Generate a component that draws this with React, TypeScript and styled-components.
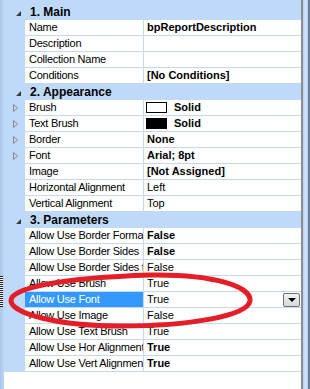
import React from 'react'
import styled, { createGlobalStyle } from 'styled-components'

type Prop = {
  label: string
  value?: string
  bold?: boolean
  swatch?: string
  sub?: boolean
  selected?: boolean
}

type Section = { title: string; props: Prop[] }

const sections: Section[] = [
  {
    title: '1. Main',
    props: [
      { label: 'Name', value: 'bpReportDescription', bold: true },
      { label: 'Description' },
      { label: 'Collection Name' },
      { label: 'Conditions', value: '[No Conditions]', bold: true },
    ],
  },
  {
    title: '2. Appearance',
    props: [
      { label: 'Brush', value: 'Solid', bold: true, swatch: '#ffffff', sub: true },
      { label: 'Text Brush', value: 'Solid', bold: true, swatch: '#000000', sub: true },
      { label: 'Border', value: 'None', bold: true, sub: true },
      { label: 'Font', value: 'Arial; 8pt', bold: true, sub: true },
      { label: 'Image', value: '[Not Assigned]', bold: true },
      { label: 'Horizontal Alignment', value: 'Left' },
      { label: 'Vertical Alignment', value: 'Top' },
    ],
  },
  {
    title: '3. Parameters',
    props: [
      { label: 'Allow Use Border Formats', value: 'False', bold: true },
      { label: 'Allow Use Border Sides', value: 'False', bold: true },
      { label: 'Allow Use Border Sides from Style', value: 'False' },
      { label: 'Allow Use Brush', value: 'True' },
      { label: 'Allow Use Font', value: 'True', selected: true },
      { label: 'Allow Use Image', value: 'False' },
      { label: 'Allow Use Text Brush', value: 'True' },
      { label: 'Allow Use Hor Alignment', value: 'True', bold: true },
      { label: 'Allow Use Vert Alignment', value: 'True', bold: true },
    ],
  },
]

const App = () => {
  return (
    <Page>
      <GlobalStyle />
      <LeftStrip>
        <Grip />
      </LeftStrip>
      <Grid>
        {sections.map((s, i) => (
          <React.Fragment key={s.title}>
            <HeaderRow first={i === 0}>
              <Expander>
                <svg width="5" height="5" viewBox="0 0 5 5">
                  <polygon points="5,0 5,5 0,5" fill="#3c3c3c" />
                </svg>
              </Expander>
              <HeaderTitle>{s.title}</HeaderTitle>
            </HeaderRow>
            {s.props.map((p) => (
              <Row key={p.label}>
                <Margin>
                  {p.sub && (
                    <svg width="5" height="8" viewBox="0 0 5 8">
                      <polygon points="0.5,0.5 4.5,4 0.5,7.5" fill="none" stroke="#8a8a8a" strokeWidth="1" />
                    </svg>
                  )}
                </Margin>
                <Label selected={p.selected}>{p.label}</Label>
                <Value bold={p.bold}>
                  {p.swatch && <Swatch color={p.swatch} />}
                  <ValueText>{p.value}</ValueText>
                  {p.selected && (
                    <DropButton>
                      <svg width="8" height="4" viewBox="0 0 8 4">
                        <polygon points="0,0 8,0 4,4" fill="#000" />
                      </svg>
                    </DropButton>
                  )}
                </Value>
              </Row>
            ))}
          </React.Fragment>
        ))}
      </Grid>
      <ScrollStrip />
      <Annotation width="310" height="389" viewBox="0 0 310 389">
        <path
          d="M 11 300 C 12 288, 60 278, 150 275 C 215 274, 252 287, 250 301 C 247 316, 190 326, 120 326 C 60 326, 10 314, 11 300 Z"
          fill="none"
          stroke="#e41e26"
          strokeWidth="5"
        />
      </Annotation>
    </Page>
  )
}

export default App

const GlobalStyle = createGlobalStyle`
  html, body {
    margin: 0;
    padding: 0;
    background: #ffffff;
  }
  body {
    font-family: "Liberation Sans", Arial, sans-serif;
    font-size: 11px;
    color: #000;
  }
`

const blue = '#bfdaf8'
const line = '#c3d8f3'

const Page = styled.div`
  position: relative;
  display: flex;
  width: 310px;
  height: 389px;
  overflow: hidden;
  background: #ffffff;
`

const LeftStrip = styled.div`
  width: 4px;
  flex-shrink: 0;
  background: linear-gradient(to right, #a9c5ea, #bad5f5);
  display: flex;
  flex-direction: column;
`

const Grip = styled.div`
  margin-top: 276px;
  width: 3px;
  height: 31px;
  background-image: repeating-linear-gradient(to bottom, #222 0px, #222 1px, #f4f4f4 1px, #f4f4f4 2px);
`

const Grid = styled.div`
  width: 297px;
  flex-shrink: 0;
  display: flex;
  flex-direction: column;
`

const HeaderRow = styled.div<{ first?: boolean }>`
  display: flex;
  align-items: center;
  height: 16px;
  padding-top: ${(p) => (p.first ? '4px' : '0')};
  background: ${blue};
`

const Expander = styled.div`
  width: 26px;
  flex-shrink: 0;
  display: flex;
  justify-content: flex-end;
  padding-right: 9px;
  box-sizing: border-box;
  padding-top: 2px;
`

const HeaderTitle = styled.div`
  font-size: 12px;
  font-weight: bold;
  white-space: nowrap;
`

const Row = styled.div`
  display: flex;
  height: 16px;
`

const Margin = styled.div`
  width: 21px;
  flex-shrink: 0;
  background: ${blue};
  display: flex;
  align-items: center;
  padding-left: 9px;
  box-sizing: border-box;
`

const Label = styled.div<{ selected?: boolean }>`
  width: 119px;
  flex-shrink: 0;
  box-sizing: border-box;
  padding-left: 4px;
  line-height: 15px;
  letter-spacing: -0.25px;
  white-space: nowrap;
  overflow: hidden;
  border-right: 1px solid ${line};
  border-bottom: 1px solid ${line};
  background: ${(p) => (p.selected ? '#3399ff' : '#ffffff')};
  color: ${(p) => (p.selected ? '#ffffff' : '#000000')};
`

const Value = styled.div<{ bold?: boolean }>`
  flex: 1;
  display: flex;
  align-items: center;
  box-sizing: border-box;
  padding-left: 3px;
  padding-right: 1px;
  line-height: 15px;
  white-space: nowrap;
  overflow: hidden;
  font-weight: ${(p) => (p.bold ? 'bold' : 'normal')};
  border-bottom: 1px solid ${line};
`

const ValueText = styled.span`
  flex: 1;
`

const Swatch = styled.span<{ color: string }>`
  width: 21px;
  height: 11px;
  margin-left: -1px;
  margin-right: 7px;
  box-sizing: border-box;
  border: 1px solid #000;
  background: ${(p) => p.color};
  flex-shrink: 0;
`

const DropButton = styled.div`
  width: 17px;
  height: 14px;
  align-self: flex-end;
  box-sizing: border-box;
  border: 1px solid #707070;
  border-radius: 2px;
  background: linear-gradient(#f3f3f3, #d8d8d8);
  display: flex;
  align-items: center;
  justify-content: center;
`

const ScrollStrip = styled.div`
  width: 9px;
  flex-shrink: 0;
  box-sizing: border-box;
  border-left: 2px solid #8c8e90;
  border-right: 2px solid #6b7d95;
  background: linear-gradient(to right, #b4d0f2, #d2e4fa, #b4d0f2);
`

const Annotation = styled.svg`
  position: absolute;
  left: 0;
  top: 0;
  pointer-events: none;
`
